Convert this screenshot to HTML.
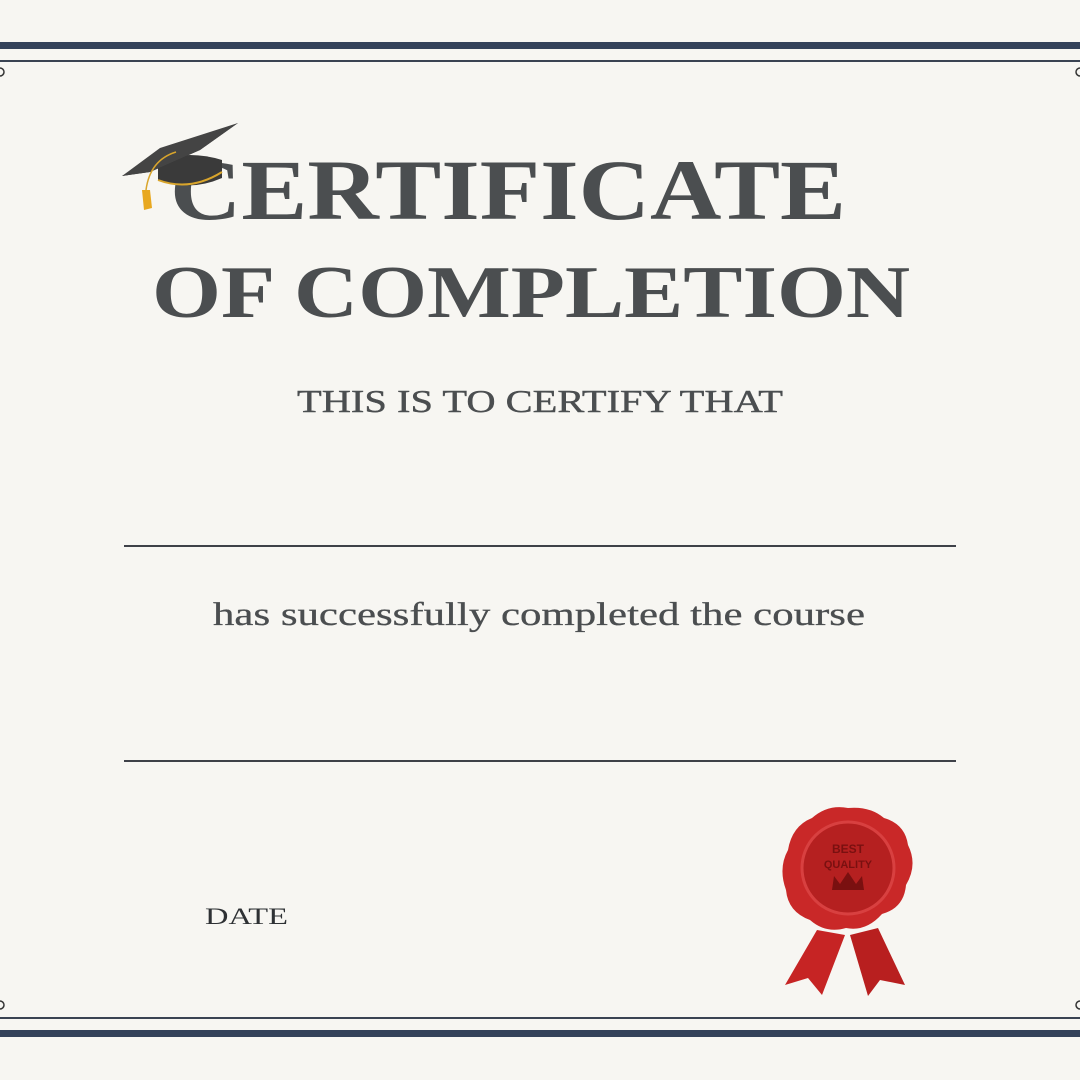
<!DOCTYPE html>
<html><head><style>
html,body{margin:0;padding:0;background:#f7f6f2;}
svg{display:block}
</style></head><body>
<svg width="1080" height="1080" viewBox="0 0 1080 1080" xmlns="http://www.w3.org/2000/svg">
<rect width="1080" height="1080" fill="#f7f6f2"/>
<rect x="0" y="42" width="1080" height="7" fill="#34425a"/>
<rect x="0" y="60" width="1080" height="2" fill="#3a4352"/>
<rect x="0" y="1017" width="1080" height="2" fill="#3a4352"/>
<rect x="0" y="1030" width="1080" height="7" fill="#34425a"/>
<g fill="none" stroke="#333" stroke-width="1.5">
<circle cx="0" cy="72" r="4"/><circle cx="1080" cy="72" r="4"/>
<circle cx="0" cy="1005" r="4"/><circle cx="1080" cy="1005" r="4"/>
</g>
<g font-family="'Liberation Serif',serif" fill="#4b4e50">
<text x="170" y="219" font-size="86" font-weight="bold" textLength="676" lengthAdjust="spacingAndGlyphs">CERTIFICATE</text>
<text x="152" y="317" font-size="74" font-weight="bold" textLength="758" lengthAdjust="spacingAndGlyphs">OF COMPLETION</text>
<text x="297" y="412" font-size="32" textLength="486" lengthAdjust="spacingAndGlyphs" stroke="#4b4e50" stroke-width="0.4">THIS IS TO CERTIFY THAT</text>
<text x="213" y="625" font-size="33" textLength="652" lengthAdjust="spacingAndGlyphs" stroke="#4b4e50" stroke-width="0.3">has successfully completed the course</text>
<text x="205" y="924" font-size="23" textLength="83" lengthAdjust="spacingAndGlyphs" fill="#2e3134">DATE</text>
</g>
<rect x="124" y="545" width="832" height="2" fill="#3e4148"/>
<rect x="124" y="760" width="832" height="2" fill="#3e4148"/>
<g>
<path d="M158 160 Q190 150 222 160 L222 178 Q190 192 158 180 Z" fill="#3a3a3a"/>
<path d="M158 180 Q190 192 222 172" fill="none" stroke="#d9a52c" stroke-width="2"/>
<path d="M122 176 L238 123 L200 150 L150 172 Z" fill="#2a2a2a"/>
<path d="M122 176 L150 172 L200 150 L238 123 L160 148 Z" fill="#444"/>
<path d="M176 152 Q150 160 146 190" fill="none" stroke="#d9a52c" stroke-width="1.5"/>
<path d="M142 190 L150 190 L152 208 L144 210 Z" fill="#e8a820"/>
</g>
<g>
<path d="M817 930 L785 985 L808 978 L822 995 L845 935 Z" fill="#c62424"/>
<path d="M850 935 L868 996 L880 980 L905 985 L878 928 Z" fill="#b81f1f"/>
<path d="M848 808 Q870 806 884 818 Q905 824 908 845 Q918 865 906 885 Q904 908 882 914 Q866 932 846 928 Q826 934 810 920 Q788 912 786 890 Q778 868 788 850 Q792 826 812 818 Q828 804 848 808 Z" fill="#c92828"/>
<circle cx="848" cy="868" r="46" fill="#b52020" stroke="#d84040" stroke-width="3"/>
<text x="848" y="853" font-family="'Liberation Sans',sans-serif" font-weight="bold" font-size="12" fill="#7a1010" text-anchor="middle">BEST</text>
<text x="848" y="868" font-family="'Liberation Sans',sans-serif" font-weight="bold" font-size="11" fill="#7a1010" text-anchor="middle">QUALITY</text>
<path d="M832 890 L834 876 L840 884 L848 872 L856 884 L862 876 L864 890 Z" fill="#7a1010"/>
</g>
</svg>
</body></html>
